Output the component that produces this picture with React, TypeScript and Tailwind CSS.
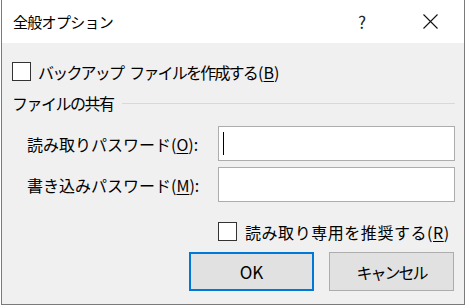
import React from 'react';

const font = { fontFamily: '"Noto Sans CJK JP", "Noto Sans", sans-serif' };

function CheckBox() {
  return <div className="w-[19px] h-[19px] shrink-0 border border-[#333333] bg-white" />;
}

export default function App() {
  return (
    <div className="w-[466px] h-[307px] bg-white overflow-hidden text-black" style={font}>
      <div className="ml-px w-[464px] h-[305px] flex flex-col border-x border-b border-[#7a7a7a] bg-[#f0f0f0]">
        {/* title bar */}
        <div className="h-[43px] shrink-0 bg-white flex items-center pl-[11px]">
          <span className="text-[15px] leading-none tracking-[-0.7px]">全般オプション</span>
          <span className="ml-auto text-[17px] leading-none text-[#222]">?</span>
          <svg width="15" height="15" viewBox="0 0 15 15" className="ml-[57px] mr-[26px]">
            <path d="M0.5 0.5L14.5 14.5M14.5 0.5L0.5 14.5" stroke="#111" strokeWidth="1.1" fill="none" />
          </svg>
        </div>

        <div className="flex-1 flex flex-col pl-[10px] pr-[9px] text-[16px] leading-none">
          <div className="mt-[19px] h-[19px] flex items-center gap-[7px]">
            <CheckBox />
            <span className="flex items-center">
              <span className="tracking-[-1.8px]">バックアップ</span>
              <span className="ml-[6px] tracking-[-1.8px]">ファイルを作成する</span>
              <span className="ml-[1px]">(<span className="underline underline-offset-2">B</span>)</span>
            </span>
          </div>

          <div className="mt-[12px] h-[20px] flex items-center gap-[8px]">
            <span className="tracking-[-1.5px]">ファイルの共有</span>
            <div className="flex-1 border-t border-[#d9d9d9]" />
          </div>

          <div className="mt-[13px] h-[35px] flex items-center pl-[15px]">
            <span>読み取りパスワード(<span className="underline underline-offset-2">O</span>):</span>
            <div className="ml-auto w-[237px] h-[35px] border border-[#adadad] bg-white flex items-center pl-[4px]">
              <div className="w-px h-[23px] bg-black" />
            </div>
          </div>

          <div className="mt-[6px] h-[35px] flex items-center pl-[15px]">
            <span>書き込みパスワード(<span className="underline underline-offset-2">M</span>):</span>
            <div className="ml-auto w-[237px] h-[35px] border border-[#adadad] bg-white" />
          </div>

          <div className="mt-[20px] h-[19px] flex items-center gap-[8px] ml-[206px]">
            <CheckBox />
            <span className="tracking-[0.55px]">読み取り専用を推奨する(<span className="underline underline-offset-2">R</span>)</span>
          </div>

          <div className="mt-[11px] flex justify-end gap-[15px] mr-px">
            <button className="w-[125px] h-[39px] border-2 border-[#0078d7] bg-[#e1e1e1] text-[17px]">OK</button>
            <button className="w-[125px] h-[39px] border border-[#adadad] bg-[#e1e1e1] text-[16px] tracking-[-2px]">キャンセル</button>
          </div>
        </div>
      </div>
    </div>
  );
}
